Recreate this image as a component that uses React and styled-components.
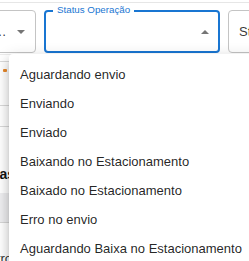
import React from "react";
import styled, { createGlobalStyle } from "styled-components";

const GlobalStyle = createGlobalStyle`
  html, body {
    margin: 0;
    padding: 0;
    background: #ffffff;
  }

  body {
    font-family: "Liberation Sans", Arial, sans-serif;
    color: rgba(0, 0, 0, 0.87);
    overflow: hidden;
  }
`;

const statusOptions = [
  "Aguardando envio",
  "Enviando",
  "Enviado",
  "Baixando no Estacionamento",
  "Baixado no Estacionamento",
  "Erro no envio",
  "Aguardando Baixa no Estacionamento",
];

const Arrow = ({ up }) => (
  <ArrowIcon width="8" height="4" viewBox="0 0 8 4" aria-hidden="true">
    {up ? <polygon points="0,4 4,0 8,4" /> : <polygon points="0,0 8,0 4,4" />}
  </ArrowIcon>
);

const App = () => {
  return (
    <>
      <GlobalStyle />
      <Viewport>
        <Sheet>
          <FilterBar>
            <Field $width={136}>
              <Value>Estacionamento Central Shopping</Value>
              <Arrow />
            </Field>
            <Field $width={176} $focused>
              <Label>Status Operação</Label>
              <Value />
              <Arrow up />
            </Field>
            <Field $width={140}>
              <Value>Status Pagamento</Value>
              <Arrow />
            </Field>
          </FilterBar>

          <Table>
            <Strip />
            <Row $height={44} $gap={22}>
              <Cell>12/03/2024</Cell>
              <StatusDot title="Pendente" />
            </Row>
            <Row $height={21}>
              <Cell>Total: 2</Cell>
            </Row>
            <Heading>Vendas Realizadas</Heading>
            <HeaderBand>
              <HeaderCell>Data</HeaderCell>
              <HeaderCell>Hora</HeaderCell>
            </HeaderBand>
            <Row $height={70} $plain>
              <Cell>Nenhum registro em Summary</Cell>
            </Row>
          </Table>
        </Sheet>

        <Menu role="listbox">
          {statusOptions.map((option) => (
            <MenuItem key={option} role="option">
              {option}
            </MenuItem>
          ))}
        </Menu>
      </Viewport>
    </>
  );
};

export default App;

const Viewport = styled.div`
  position: relative;
  width: 249px;
  height: 261px;
  overflow: hidden;
`;

const Sheet = styled.div`
  margin-left: -100px;
  width: 480px;
  padding-top: 2px;

  &::before {
    content: "";
    display: block;
    border-top: 1px solid #e6e6e6;
    height: 7px;
  }
`;

const FilterBar = styled.div`
  display: flex;
  gap: 8px;
  align-items: stretch;
`;

const Field = styled.div`
  position: relative;
  box-sizing: border-box;
  flex: 0 0 auto;
  width: ${(p) => p.$width}px;
  min-width: 0;
  height: 43px;
  display: flex;
  align-items: center;
  gap: 9px;
  padding: 0 ${(p) => (p.$focused ? 9 : 10)}px;
  border: ${(p) => (p.$focused ? "2px solid #1976d2" : "1px solid #c4c4c4")};
  border-radius: 4px;
  background: #ffffff;
`;

const Label = styled.span`
  position: absolute;
  top: -8px;
  left: 7px;
  padding: 0 4px;
  background: #ffffff;
  color: #1976d2;
  font-size: 9.75px;
  line-height: 12px;
  white-space: nowrap;
`;

const Value = styled.span`
  flex: 1 1 0;
  min-width: 0;
  font-size: 13px;
  color: rgba(0, 0, 0, 0.8);
  white-space: nowrap;
  overflow: hidden;
  text-overflow: ellipsis;
`;

const ArrowIcon = styled.svg`
  flex: 0 0 auto;
  fill: #757575;
`;

const Table = styled.div`
  margin-top: 1px;
  font-size: 13px;
`;

const Strip = styled.div`
  height: 6px;
  border-top: 1px solid #ececec;
`;

const Row = styled.div`
  box-sizing: border-box;
  height: ${(p) => p.$height}px;
  display: flex;
  align-items: center;
  gap: ${(p) => p.$gap || 12}px;
  padding-left: 16px;
  border-top: ${(p) => (p.$plain ? "0" : "1px solid #d9d9d9")};
`;

const Cell = styled.span`
  white-space: nowrap;
  color: #333333;
`;

const StatusDot = styled.span`
  align-self: flex-start;
  margin-top: 7px;
  width: 4px;
  height: 3px;
  border-radius: 1px;
  background: #e8892b;
`;

const Heading = styled.h2`
  margin: 0;
  box-sizing: border-box;
  height: 67px;
  padding: 37px 0 0 66px;
  border-top: 1px solid #d9d9d9;
  font-size: 14px;
  line-height: 20px;
  font-weight: 700;
  color: #111111;
  white-space: nowrap;
`;

const HeaderBand = styled.div`
  box-sizing: border-box;
  height: 30px;
  display: flex;
  align-items: center;
  gap: 20px;
  padding-left: 12px;
  background: #eeeef0;
  border-bottom: 1px solid #d6d6d6;
`;

const HeaderCell = styled.span`
  font-weight: 700;
  color: #333333;
`;

const Menu = styled.ul`
  position: absolute;
  top: 54px;
  left: 9px;
  width: 270px;
  margin: 0;
  padding: 6px 0;
  list-style: none;
  background: #ffffff;
  border-radius: 4px;
  box-shadow: 0 5px 5px -3px rgba(0, 0, 0, 0.2),
    0 8px 10px 1px rgba(0, 0, 0, 0.14), 0 3px 14px 2px rgba(0, 0, 0, 0.12);
`;

const MenuItem = styled.li`
  box-sizing: border-box;
  height: 29px;
  display: flex;
  align-items: center;
  padding: 0 11px;
  font-size: 13px;
  color: rgba(0, 0, 0, 0.87);
  white-space: nowrap;
`;
